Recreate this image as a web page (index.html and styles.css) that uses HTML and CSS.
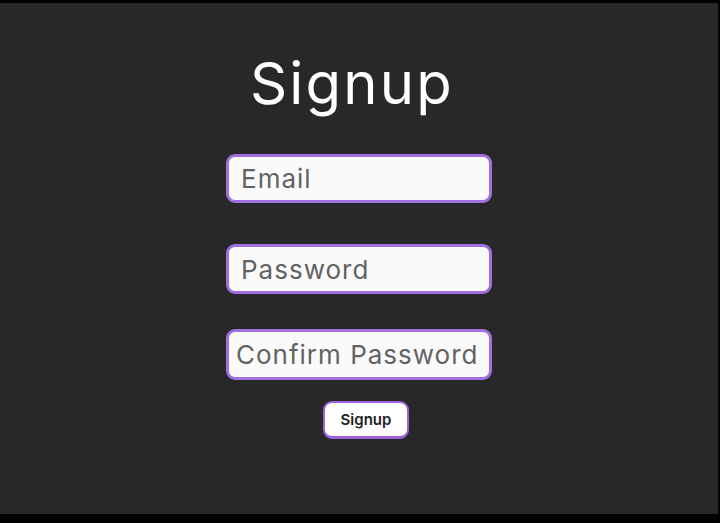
FILE: index.html
```html
<!DOCTYPE html>
<html lang="en">
<head>
<meta charset="utf-8">
<title>Signup</title>
<link rel="stylesheet" href="styles.css">
</head>
<body>
<main class="panel">
  <h1 class="title">Signup</h1>
  <form class="form">
    <input class="field field-email" type="email" placeholder="Email">
    <input class="field field-password" type="password" placeholder="Password">
    <input class="field field-confirm" type="password" placeholder="Confirm Password">
    <button class="submit" type="button">Signup</button>
  </form>
</main>
</body>
</html>
```
FILE: styles.css
```css
html, body {
  margin: 0;
  padding: 0;
  background: #000;
  height: 100%;
}
body {
  padding: 3px 2px 9px 0;
  box-sizing: border-box;
}
.panel {
  height: 100%;
  background: #282828;
  display: flex;
  flex-direction: column;
  align-items: center;
  font-family: "Inter", "Noto Sans", sans-serif;
}
.title {
  margin: 51px 14px 0 0;
  font-size: 58px;
  line-height: 58px;
  font-weight: 400;
  color: #ffffff;
  letter-spacing: 2.2px;
}
.form {
  display: flex;
  flex-direction: column;
  align-items: center;
  margin-top: 42px;
}
.field {
  box-sizing: border-box;
  width: 266px;
  height: 49px;
  border: 3px solid #a070e0;
  border-radius: 9px;
  background: #fafafa;
  padding: 0 0 0 12px;
  font-family: "Inter", "Noto Sans", sans-serif;
  font-size: 26px;
  letter-spacing: 1px;
  color: #5f5f5f;
  outline: none;
}
.field::placeholder {
  color: #626262;
  opacity: 1;
}
.field-password {
  margin-top: 41px;
  height: 50px;
}
.field-confirm {
  margin-top: 35px;
  height: 51px;
  padding-left: 7px;
}
.submit {
  margin: 21px 0 0 14px;
  box-sizing: border-box;
  width: 86px;
  height: 38px;
  background: #ffffff;
  border: 2px solid #9a62dc;
  border-bottom-width: 3px;
  border-radius: 9px;
  font-family: "Inter", "Noto Sans", sans-serif;
  font-size: 15px;
  font-weight: 600;
  color: #222222;
  padding: 0;
}
```
